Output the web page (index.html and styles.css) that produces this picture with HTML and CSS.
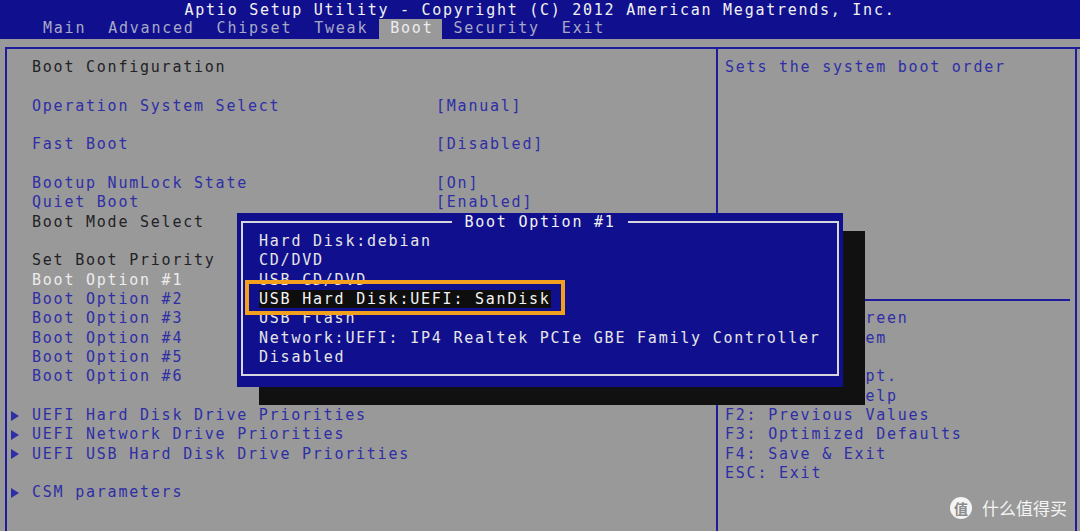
FILE: index.html
```html
<!DOCTYPE html>
<html lang="en">
<head>
<meta charset="utf-8">
<title>Aptio Setup Utility - Boot</title>
<link rel="stylesheet" href="styles.css">
</head>
<body>
<div class="screen">
  <header class="topbar">
    <div class="title">Aptio Setup Utility - Copyright (C) 2012 American Megatrends, Inc.</div>
    <nav class="tabs">
      <span class="tab">Main</span>
      <span class="tab">Advanced</span>
      <span class="tab">Chipset</span>
      <span class="tab">Tweak</span>
      <span class="tab active">Boot</span>
      <span class="tab">Security</span>
      <span class="tab">Exit</span>
    </nav>
  </header>

  <main class="frame">
    <div class="panels">
      <section class="left">
        <div class="row dark">Boot Configuration</div>
        <div class="row"></div>
        <div class="row blue"><span>Operation System Select</span><span>[Manual]</span></div>
        <div class="row"></div>
        <div class="row blue"><span>Fast Boot</span><span>[Disabled]</span></div>
        <div class="row"></div>
        <div class="row blue"><span>Bootup NumLock State</span><span>[On]</span></div>
        <div class="row blue"><span>Quiet Boot</span><span>[Enabled]</span></div>
        <div class="row dark">Boot Mode Select</div>
        <div class="row"></div>
        <div class="row dark">Set Boot Priority</div>
        <div class="row white">Boot Option #1</div>
        <div class="row blue">Boot Option #2</div>
        <div class="row blue">Boot Option #3</div>
        <div class="row blue">Boot Option #4</div>
        <div class="row blue">Boot Option #5</div>
        <div class="row blue">Boot Option #6</div>
        <div class="row"></div>
        <div class="row blue sub"><span class="arrow"></span>UEFI Hard Disk Drive Priorities</div>
        <div class="row blue sub"><span class="arrow"></span>UEFI Network Drive Priorities</div>
        <div class="row blue sub"><span class="arrow"></span>UEFI USB Hard Disk Drive Priorities</div>
        <div class="row"></div>
        <div class="row blue sub"><span class="arrow"></span>CSM parameters</div>
      </section>

      <aside class="right">
        <div class="hrow">Sets the system boot order</div>
        <div class="spacer"></div>
        <div class="hrow rule"></div>
        <div class="hrow">→←: Select Screen</div>
        <div class="hrow">↑↓: Select Item</div>
        <div class="hrow">Enter: Select</div>
        <div class="hrow">+/-: Change Opt.</div>
        <div class="hrow">F1: General Help</div>
        <div class="hrow">F2: Previous Values</div>
        <div class="hrow">F3: Optimized Defaults</div>
        <div class="hrow">F4: Save &amp; Exit</div>
        <div class="hrow">ESC: Exit</div>
      </aside>
    </div>
  </main>

  <div class="popup-shadow"></div>
  <div class="popup">
    <fieldset class="popup-frame">
      <legend class="popup-title">Boot Option #1</legend>
      <div class="item">Hard Disk:debian</div>
      <div class="item">CD/DVD</div>
      <div class="item">USB CD/DVD</div>
      <div class="item"><span class="sel">USB Hard Disk:UEFI: SanDisk</span></div>
      <div class="item">USB Flash</div>
      <div class="item">Network:UEFI: IP4 Realtek PCIe GBE Family Controller</div>
      <div class="item">Disabled</div>
    </fieldset>
  </div>

  <div class="annot"></div>

  <div class="watermark">
    <span class="wm-icon">值</span>
    <span class="wm-text">什么值得买</span>
  </div>
</div>
</body>
</html>
```

FILE: styles.css
```css
* { box-sizing: border-box; }

html, body {
  margin: 0;
  padding: 0;
}

body {
  width: 1080px;
  height: 531px;
  overflow: hidden;
  background: #999999;
  font-family: "DejaVu Sans Mono", "Liberation Mono", monospace;
  font-size: 15px;
  line-height: 19.33px;
  letter-spacing: 1.77px;
}

.screen {
  position: relative;
  width: 1080px;
  height: 531px;
  background: #999999;
  overflow: hidden;
}

/* ---------- top bar ---------- */
.topbar {
  background: #10108e;
  height: 38.67px;
}

.title {
  height: 19.33px;
  padding-top: 1px;
  text-align: center;
  color: #f2f2f2;
  letter-spacing: 1.74px;
}

.tabs {
  display: flex;
  height: 19.33px;
  padding-left: 32px;
}

.tab {
  padding: 0 11px;
  color: #a8a8c6;
}

.tab.active {
  background: #999999;
  color: #ececf0;
  padding: 0 9px 0 11px;
}

/* ---------- main frame ---------- */
.frame {
  padding-top: 8.67px;
  height: 492.33px;
}

.panels {
  display: grid;
  grid-template-columns: 711px 361px;
  margin-left: 5px;
  height: 100%;
  border-top: 2px solid #1c1c9c;
}

.left {
  border-left: 2px solid #1c1c9c;
  padding: 8.67px 0 0 25px;
}

.right {
  border-left: 2px solid #1c1c9c;
  border-right: 2px solid #1c1c9c;
  padding: 8.67px 5px 0 7px;
  color: #2e2ea6;
}

.row {
  height: 19.33px;
  display: grid;
  grid-template-columns: 404px auto;
  white-space: nowrap;
}

.row.dark { color: #222226; }
.row.blue { color: #2e2ea6; }
.row.white { color: #ececec; }

.row.sub {
  display: flex;
  align-items: center;
  margin-left: -22px;
}

.arrow {
  width: 22px;
  height: 19.33px;
  display: flex;
  align-items: center;
}

.arrow::before {
  content: "";
  display: block;
  width: 0;
  height: 0;
  border-left: 8px solid #2e2ea6;
  border-top: 5px solid transparent;
  border-bottom: 5px solid transparent;
  margin-left: 1px;
}

.hrow {
  height: 19.33px;
  white-space: nowrap;
}

.spacer {
  height: 212.67px;
}

.hrow.rule {
  display: flex;
  align-items: center;
}

.hrow.rule::after {
  content: "";
  flex: 1;
  border-top: 2px solid #1c1c9c;
}

/* ---------- popup ---------- */
.popup-shadow {
  position: absolute;
  left: 259px;
  top: 231.33px;
  width: 606px;
  height: 174px;
  background: #111111;
}

.popup {
  position: absolute;
  left: 237px;
  top: 212.67px;
  width: 606px;
  height: 174px;
  background: #10108e;
  padding: 0 4px 10.67px;
}

.popup-frame {
  margin: 0;
  height: 100%;
  min-width: 0;
  border: 2px solid #d6d6de;
  padding: 0;
  color: #e6e6e6;
}

.popup-title {
  margin: 0 auto;
  padding: 0 12px;
  color: #f2f2f2;
  line-height: 19.33px;
}

.item {
  height: 19.33px;
  padding-left: 16px;
  white-space: nowrap;
}

.sel {
  background: #0e0e0e;
  color: #f4f4f4;
}

/* ---------- annotation & watermark ---------- */
.annot {
  position: absolute;
  left: 245px;
  top: 280px;
  width: 320px;
  height: 35px;
  border: 4px solid #f2a01e;
}

.watermark {
  position: absolute;
  left: 950px;
  top: 497px;
  display: flex;
  align-items: center;
  gap: 10px;
  font-family: "Noto Sans CJK SC", sans-serif;
  letter-spacing: 0;
}

.wm-icon {
  width: 22px;
  height: 22px;
  border-radius: 50%;
  background: #f4f4f4;
  color: #8a8a8a;
  font-size: 14px;
  font-weight: 700;
  line-height: 1;
  display: flex;
  align-items: center;
  justify-content: center;
}

.wm-text {
  color: #f4f4f4;
  font-size: 17px;
  line-height: 22px;
}
```
